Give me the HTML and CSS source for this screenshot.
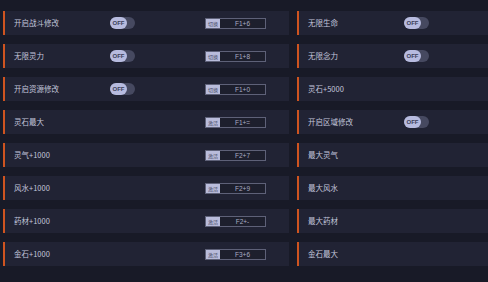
FILE: index.html
```html
<!DOCTYPE html>
<html lang="zh-CN">
<head>
    <meta charset="UTF-8">
    <title>修改器</title>
    <link rel="stylesheet" href="styles.css">
</head>
<body>
    <div class="grid">
        <div class="row">
            <span class="name">开启战斗修改</span>
            <span class="toggle"><span class="knob">OFF</span></span>
            <span class="key"><b>切换</b><i>F1+6</i></span>
        </div>
        <div class="row">
            <span class="name">无限生命</span>
            <span class="toggle"><span class="knob">OFF</span></span>
        </div>

        <div class="row">
            <span class="name">无限灵力</span>
            <span class="toggle"><span class="knob">OFF</span></span>
            <span class="key"><b>切换</b><i>F1+8</i></span>
        </div>
        <div class="row">
            <span class="name">无限念力</span>
            <span class="toggle"><span class="knob">OFF</span></span>
        </div>

        <div class="row">
            <span class="name">开启资源修改</span>
            <span class="toggle"><span class="knob">OFF</span></span>
            <span class="key"><b>切换</b><i>F1+0</i></span>
        </div>
        <div class="row">
            <span class="name">灵石+5000</span>
        </div>

        <div class="row">
            <span class="name">灵石最大</span>
            <span></span>
            <span class="key"><b>激活</b><i>F1+=</i></span>
        </div>
        <div class="row">
            <span class="name">开启区域修改</span>
            <span class="toggle"><span class="knob">OFF</span></span>
        </div>

        <div class="row">
            <span class="name">灵气+1000</span>
            <span></span>
            <span class="key"><b>激活</b><i>F2+7</i></span>
        </div>
        <div class="row">
            <span class="name">最大灵气</span>
        </div>

        <div class="row">
            <span class="name">风水+1000</span>
            <span></span>
            <span class="key"><b>激活</b><i>F2+9</i></span>
        </div>
        <div class="row">
            <span class="name">最大风水</span>
        </div>

        <div class="row">
            <span class="name">药材+1000</span>
            <span></span>
            <span class="key"><b>激活</b><i>F2+-</i></span>
        </div>
        <div class="row">
            <span class="name">最大药材</span>
        </div>

        <div class="row">
            <span class="name">金石+1000</span>
            <span></span>
            <span class="key"><b>激活</b><i>F3+6</i></span>
        </div>
        <div class="row">
            <span class="name">金石最大</span>
        </div>
    </div>
</body>
</html>
```

FILE: styles.css
```css
html, body { margin: 0; height: 100%; }
body {
    background: #181a27;
    font-family: "Noto Sans CJK SC", "Noto Sans", sans-serif;
    color: #c3c6dc;
    overflow: hidden;
}
.grid {
    display: grid;
    grid-template-columns: 286px minmax(0, 1fr);
    column-gap: 8px;
    row-gap: 9px;
    padding: 11px 0 0 3px;
}
.row {
    display: grid;
    grid-template-columns: 96px 95px 61px;
    align-items: center;
    height: 24px;
    padding-left: 9px;
    background: #212334;
    border-left: 2px solid #cf5420;
    white-space: nowrap;
    overflow: hidden;
}
.name { font-size: 7.5px; line-height: 1; }
.toggle {
    display: flex;
    width: 25px;
    height: 12px;
    border-radius: 6px;
    background: #464960;
}
.knob {
    width: 17px;
    height: 12px;
    border-radius: 6px;
    background: #b7bbdf;
    color: #3b3e58;
    font-family: "Liberation Sans", sans-serif;
    font-weight: bold;
    font-size: 6px;
    line-height: 12px;
    text-align: center;
}
.key {
    display: flex;
    height: 11px;
    border: 1px solid #5e6178;
    background: #1d1f2d;
    box-sizing: border-box;
}
.key b {
    width: 14px;
    background: #b9bcdb;
    color: #4a4d68;
    font-weight: normal;
    font-size: 5px;
    line-height: 9px;
    text-align: center;
}
.key i {
    flex: 1;
    font-style: normal;
    font-family: "Liberation Sans", sans-serif;
    font-size: 6.5px;
    line-height: 9px;
    text-align: center;
    color: #a9acc3;
}
```
